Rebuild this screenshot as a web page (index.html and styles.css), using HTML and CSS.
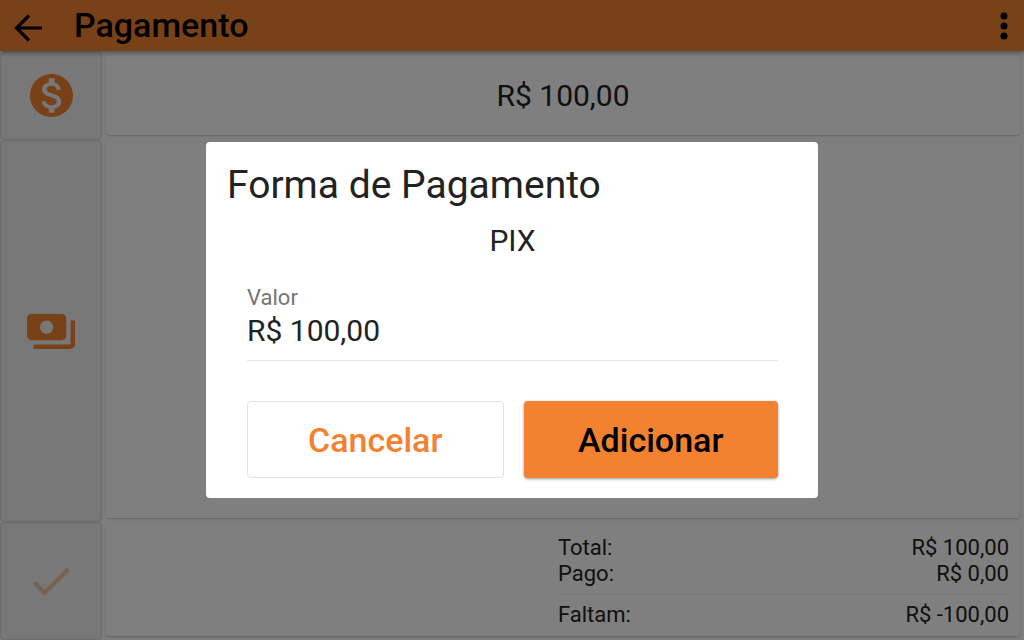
FILE: index.html
```html
<!DOCTYPE html>
<html lang="pt-BR">
<head>
  <meta charset="UTF-8">
  <meta name="viewport" content="width=device-width, initial-scale=1.0">
  <title>Pagamento</title>

  <link rel="stylesheet" href="styles.css">
</head>
<body>
  <header class="app-bar">
    <button class="icon-button" aria-label="Voltar">
      <svg class="back-icon" viewBox="0 0 28 28">
        <path d="M28 14H3M15 1.5L2.5 14 15 26.5" fill="none" stroke="#000" stroke-width="3.2"/>
      </svg>
    </button>
    <h1>Pagamento</h1>
    <button class="icon-button menu-button" aria-label="Mais opções">
      <svg class="menu-icon" viewBox="0 0 8 28">
        <circle cx="4" cy="4" r="3.5"/>
        <circle cx="4" cy="14" r="3.5"/>
        <circle cx="4" cy="24" r="3.5"/>
      </svg>
    </button>
  </header>

  <div class="content">
    <nav class="sidebar">
      <button class="side-button side-money" aria-label="Dinheiro">
        <svg class="money-icon" viewBox="2 2 20 20">
          <path d="M12 2C6.48 2 2 6.48 2 12s4.48 10 10 10 10-4.48 10-10S17.52 2 12 2zm1.41 16.09V20h-2.67v-1.93c-1.71-.36-3.16-1.46-3.27-3.4h1.96c.1 1.05.82 1.87 2.65 1.87 1.96 0 2.4-.98 2.4-1.59 0-.83-.44-1.61-2.67-2.14-2.48-.6-4.18-1.62-4.18-3.67 0-1.72 1.39-2.84 3.11-3.21V4h2.67v1.95c1.86.45 2.79 1.86 2.85 3.39H14.3c-.05-1.11-.64-1.87-2.22-1.87-1.5 0-2.4.68-2.4 1.64 0 .84.65 1.39 2.67 1.91s4.18 1.39 4.18 3.91c-.01 1.83-1.38 2.83-3.12 3.16z"/>
        </svg>
      </button>
      <button class="side-button side-payments" aria-label="Formas de pagamento">
        <svg class="payments-icon" viewBox="1 4 22 16">
          <path d="M19 14V6c0-1.1-.9-2-2-2H3c-1.1 0-2 .9-2 2v8c0 1.1.9 2 2 2h14c1.1 0 2-.9 2-2zm-9-1c-1.66 0-3-1.34-3-3s1.34-3 3-3 3 1.34 3 3-1.34 3-3 3zm13-6v11c0 1.1-.9 2-2 2H4v-2h17V7h2z"/>
        </svg>
      </button>
      <button class="side-button side-confirm" aria-label="Confirmar" disabled>
        <svg class="check-icon" viewBox="3 5 18 14">
          <path d="M9 16.17L4.83 12l-1.42 1.41L9 19 21 7l-1.41-1.41z"/>
        </svg>
      </button>
    </nav>

    <main class="panels">
      <section class="card amount">R$ 100,00</section>
      <section class="card payment-list"></section>
      <section class="card summary">
        <dl class="totals">
          <div class="total-row"><dt>Total:</dt><dd>R$ 100,00</dd></div>
          <div class="total-row"><dt>Pago:</dt><dd>R$ 0,00</dd></div>
          <div class="total-row total-missing"><dt>Faltam:</dt><dd>R$ -100,00</dd></div>
        </dl>
      </section>
    </main>
  </div>

  <div class="overlay">
    <form class="dialog" role="dialog" aria-labelledby="dialog-title">
      <h2 id="dialog-title">Forma de Pagamento</h2>
      <p class="method">PIX</p>
      <div class="field">
        <label for="valor">Valor</label>
        <input id="valor" type="text" value="R$ 100,00">
      </div>
      <div class="actions">
        <button type="button" class="cancel-button">Cancelar</button>
        <button type="button" class="add-button">Adicionar</button>
      </div>
    </form>
  </div>
</body>
</html>
```

FILE: styles.css
```css
* {
  box-sizing: border-box;
}

body {
  margin: 0;
  height: 100vh;
  display: flex;
  flex-direction: column;
  overflow: hidden;
  background: #fafafa;
  color: #222;
  font-family: Roboto, sans-serif;
}

button {
  font-family: inherit;
  cursor: pointer;
}

/* App bar */
.app-bar {
  position: relative;
  display: flex;
  align-items: center;
  height: 51px;
  padding: 0 16px 0 14px;
  background: #f38230;
  box-shadow: 0 2px 5px rgba(0, 0, 0, 0.35);
}

.app-bar h1 {
  margin: 0 0 0 32px;
  font-size: 34px;
  line-height: 38px;
  padding-bottom: 2px;
  font-weight: 500;
  color: #000;
}

.icon-button {
  display: flex;
  padding: 4px 0 0;
  border: 0;
  background: none;
}

.menu-button {
  margin-left: auto;
  padding: 0;
}

.back-icon {
  width: 28px;
  height: 28px;
}

.menu-icon {
  width: 8px;
  height: 28px;
}

/* Page */
.content {
  flex: 1;
  display: flex;
  min-height: 0;
}

.sidebar {
  display: flex;
  flex-direction: column;
  width: 102px;
}

.side-button {
  display: flex;
  align-items: center;
  justify-content: center;
  padding: 0;
  border: 1px solid #dadada;
  border-radius: 4px;
  background: #f0f0f0;
  box-shadow: inset 0 0 1px rgba(0, 0, 0, 0.2);
}

.side-button svg {
  fill: #f38230;
}

.side-money {
  height: 89px;
}

.side-payments {
  flex: 1;
}

.side-confirm {
  height: 118px;
}

.side-confirm svg {
  opacity: 0.4;
}

.money-icon {
  width: 43px;
  height: 43px;
}

.payments-icon {
  width: 48px;
  height: 35px;
}

.check-icon {
  width: 38px;
  height: 30px;
}

.panels {
  flex: 1;
  display: flex;
  flex-direction: column;
  gap: 8px;
  padding: 4px;
}

.card {
  border-radius: 4px;
  background: #fff;
  box-shadow: 0 1px 2px rgba(0, 0, 0, 0.2);
}

.amount {
  display: flex;
  align-items: center;
  justify-content: center;
  height: 80px;
  font-size: 30px;
}

.payment-list {
  flex: 1;
}

.summary {
  display: flex;
  justify-content: flex-end;
  height: 110px;
  padding: 9px 11px;
}

.totals {
  width: 451px;
  margin: 0;
  font-size: 22px;
  line-height: 26px;
}

.total-row {
  display: flex;
  justify-content: space-between;
}

.total-row dd {
  margin: 0;
}

.total-missing {
  margin-top: 7px;
  padding-top: 7px;
  border-top: 1px solid #ececec;
}

/* Dialog */
.overlay {
  position: fixed;
  inset: 0;
  display: flex;
  align-items: center;
  justify-content: center;
  background: rgba(0, 0, 0, 0.5);
}

.dialog {
  width: 612px;
  padding: 20px 20px 20px 21px;
  border-radius: 4px;
  background: #fff;
}

.dialog h2 {
  margin: 0;
  font-size: 39px;
  line-height: 46px;
  font-weight: 400;
}

.method {
  margin: 15px 0 0;
  font-size: 30px;
  line-height: 36px;
  text-align: center;
}

.field {
  display: flex;
  flex-direction: column;
  margin: 25px 20px 0;
  padding-bottom: 12px;
  border-bottom: 1px solid #e6e6e6;
}

.field label {
  font-size: 22px;
  line-height: 28px;
  color: #757575;
}

.field input {
  width: 100%;
  height: 36px;
  padding: 0;
  border: 0;
  outline: 0;
  background: none;
  color: inherit;
  font-family: inherit;
  font-size: 30px;
}

.actions {
  display: flex;
  gap: 20px;
  margin: 40px 20px 0;
}

.actions button {
  flex: 1;
  height: 77px;
  padding: 0;
  border-radius: 4px;
  font-size: 34px;
  font-weight: 500;
}

.cancel-button {
  border: 1px solid #e2e2e2;
  background: #fff;
  color: #f38230;
}

.add-button {
  border: 0;
  background: #f38230;
  color: #000;
  box-shadow: 0 1px 3px rgba(0, 0, 0, 0.4);
}
```
